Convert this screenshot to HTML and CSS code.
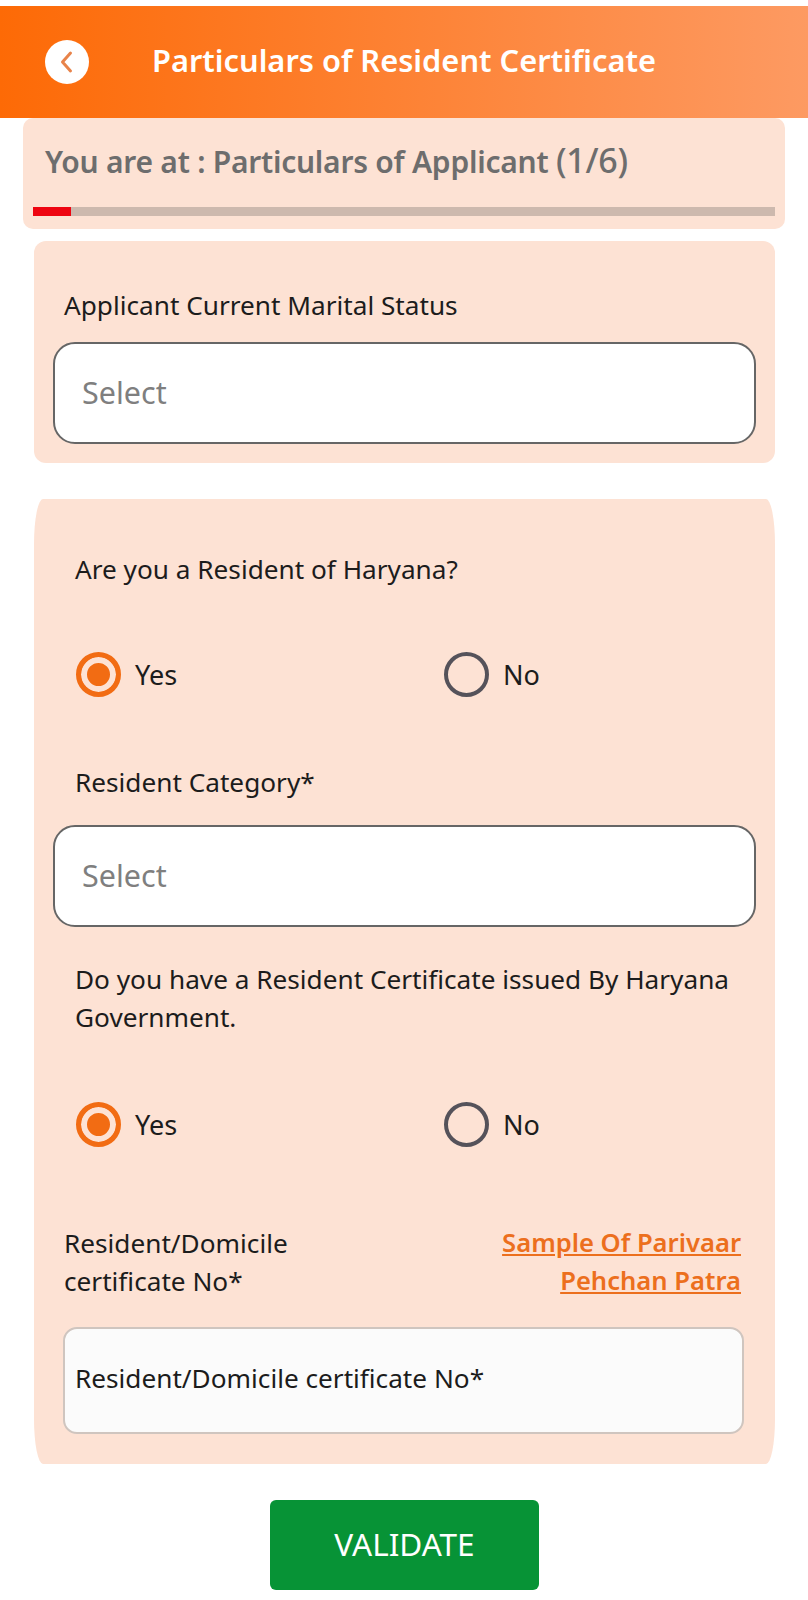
FILE: index.html
```html
<!DOCTYPE html>
<html lang="en">
<head>
    <meta charset="UTF-8">
    <meta name="viewport" content="width=device-width, initial-scale=1.0">
    <title>Particulars of Resident Certificate</title>
    <link rel="stylesheet" href="styles.css">
</head>
<body>
    <header class="app-header">
        <button class="back-btn" aria-label="Back">
            <svg width="44" height="44" viewBox="0 0 44 44">
                <circle cx="22" cy="22" r="22" fill="#fff"/>
                <path d="M25.5 13 L17.5 22 L25.5 31" fill="none" stroke="#e8834a" stroke-width="3" stroke-linecap="round" stroke-linejoin="round"/>
            </svg>
        </button>
        <h1 class="app-title">Particulars of Resident Certificate</h1>
    </header>

    <section class="progress-card">
        <p class="progress-text">You are at : Particulars of Applicant <span class="progress-count">(1/6)</span></p>
        <div class="progress-track">
            <div class="progress-fill"></div>
        </div>
    </section>

    <section class="card card-marital">
        <label class="field-label">Applicant Current Marital Status</label>
        <div class="select-box">Select</div>
    </section>

    <section class="card card-resident">
        <p class="question q-resident">Are you a Resident of Haryana?</p>
        <div class="radio-row row-first">
            <div class="radio-item">
                <span class="radio checked"></span>
                <span>Yes</span>
            </div>
            <div class="radio-item">
                <span class="radio"></span>
                <span>No</span>
            </div>
        </div>

        <p class="question q-category">Resident Category*</p>
        <div class="select-box select-category">Select</div>

        <p class="question q-certificate">Do you have a Resident Certificate issued By Haryana Government.</p>
        <div class="radio-row row-second">
            <div class="radio-item">
                <span class="radio checked"></span>
                <span>Yes</span>
            </div>
            <div class="radio-item">
                <span class="radio"></span>
                <span>No</span>
            </div>
        </div>

        <div class="cert-head">
            <span class="cert-label">Resident/Domicile<br>certificate No*</span>
            <a class="sample-link" href="#">Sample Of Parivaar<br>Pehchan Patra</a>
        </div>
        <div class="text-input">Resident/Domicile certificate No*</div>
    </section>

    <div class="actions">
        <button class="validate-btn">VALIDATE</button>
    </div>
</body>
</html>
```

FILE: styles.css
```css
* {
    margin: 0;
    padding: 0;
    box-sizing: border-box;
}

body {
    font-family: "Noto Sans", "Open Sans", sans-serif;
    background: #fff;
    color: #1c1c1c;
    font-size: 26.2px;
    line-height: 38px;
    padding-top: 6px;
    overflow: hidden;
}

.app-header {
    height: 112px;
    display: flex;
    align-items: center;
    padding-left: 45px;
    background: linear-gradient(90deg, #fd6a06, #fd9a62);
}

.back-btn {
    display: block;
    width: 44px;
    height: 44px;
    border: none;
    background: none;
}

.app-title {
    margin: 0 0 4px 63px;
    color: #fff;
    font-size: 30.8px;
    font-weight: 600;
    line-height: 44px;
}

.progress-card {
    height: 111px;
    margin: 0 23px;
    padding: 22px 10px 0;
    background: #fde2d4;
    border-radius: 10px;
}

.progress-text {
    padding-left: 12px;
    color: #6d6d6d;
    font-size: 30px;
    font-weight: 600;
    letter-spacing: -0.25px;
    line-height: 44px;
}

.progress-count {
    font-size: 34px;
    font-weight: 500;
    line-height: 30px;
}

.progress-track {
    height: 9px;
    margin-top: 23px;
    background: #cdb9ae;
}

.progress-fill {
    width: 38px;
    height: 100%;
    background: #ee0511;
}

.card {
    margin: 0 33px 0 34px;
    background: #fde2d4;
}

.card-marital {
    height: 222px;
    margin-top: 12px;
    padding: 45px 19px 0;
    border-radius: 12px;
}

.field-label {
    display: block;
    padding-left: 11px;
}

.select-box {
    height: 102px;
    padding: 0 0 3px 27px;
    display: flex;
    align-items: center;
    background: #fff;
    border: 2px solid #666;
    border-radius: 22px;
    color: #7f7f7f;
    font-size: 30.5px;
}

.card-marital .select-box {
    margin-top: 18px;
}

.card-resident {
    height: 965px;
    margin-top: 36px;
    padding: 51px 19px 0;
    border-radius: 9px / 45px;
}

.question {
    padding-left: 22px;
}

.radio-row {
    display: flex;
    padding-left: 23px;
    font-size: 27px;
}

.row-first {
    margin-top: 64px;
}

.row-second {
    margin-top: 66px;
}

.radio-item {
    width: 300px;
    display: flex;
    align-items: center;
    gap: 14px;
}

.radio-item:first-child {
    width: 368px;
}

.radio {
    width: 45px;
    height: 45px;
    border: 4px solid #55525a;
    border-radius: 50%;
}

.radio.checked {
    border: 5px solid #f26c13;
    background: #f26c13;
    box-shadow: inset 0 0 0 6px #fde2d4;
}

.q-category {
    margin-top: 66px;
}

.select-category {
    margin-top: 24px;
}

.q-certificate {
    margin-top: 33px;
}

.cert-head {
    display: flex;
    justify-content: space-between;
    margin-top: 77px;
    padding: 0 15px 0 11px;
}

.sample-link {
    color: #ec6f1d;
    font-size: 25.6px;
    font-weight: 600;
    text-align: right;
    text-decoration: underline;
}

.text-input {
    height: 107px;
    margin: 27px 12px 0 10px;
    padding: 0 0 5px 10px;
    display: flex;
    align-items: center;
    background: #fbfbfb;
    border: 2px solid #cfc5bf;
    border-radius: 14px;
}

.actions {
    display: flex;
    justify-content: center;
    margin-top: 36px;
}

.validate-btn {
    width: 269px;
    height: 90px;
    margin-right: -1px;
    padding-bottom: 4px;
    border: none;
    border-radius: 6px;
    background: #079336;
    color: #fff;
    font-family: inherit;
    font-size: 31.5px;
}
```
